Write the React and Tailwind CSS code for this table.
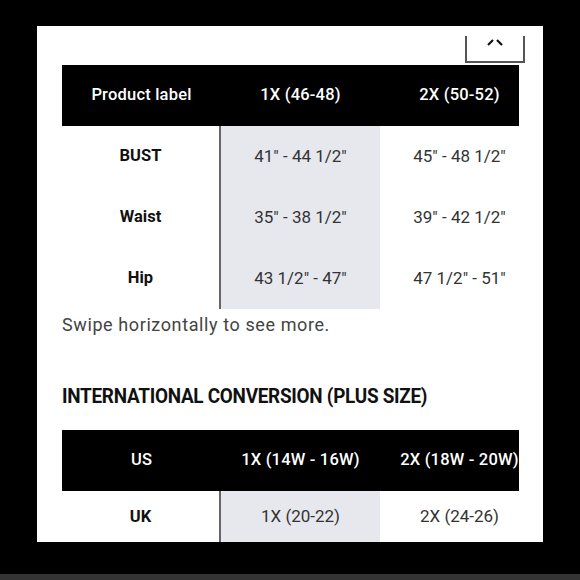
import React from "react";

const rows = [
  { label: "BUST", a: "41\" - 44 1/2\"", b: "45\" - 48 1/2\"" },
  { label: "Waist", a: "35\" - 38 1/2\"", b: "39\" - 42 1/2\"" },
  { label: "Hip", a: "43 1/2\" - 47\"", b: "47 1/2\" - 51\"" },
];

const font = { fontFamily: "Roboto, 'DejaVu Sans', sans-serif" };

function SizeTable({ head, body, rowH }) {
  return (
    <div className="w-[457px] overflow-hidden shrink-0">
      <div className="w-[477px]">
        <div className="flex h-[61px] bg-black text-white text-[16.5px] font-medium items-center tracking-[0.2px]">
          {head.map((h) => (
            <div key={h} className="w-[159px] text-center">{h}</div>
          ))}
        </div>
        {body.map((r) => (
          <div key={r.label} className={`flex ${rowH} items-center`}>
            <div className="w-[157px] text-center font-bold text-[16.5px] text-[#111]">{r.label}</div>
            <div className="w-[161px] h-full flex items-center justify-center bg-[#e6e8ee] border-l-2 border-[#666] text-[17px] text-[#333]">
              {r.a}
            </div>
            <div className="w-[159px] text-center text-[17px] text-[#333]">{r.b}</div>
          </div>
        ))}
      </div>
    </div>
  );
}

export default function App() {
  return (
    <div className="w-[580px] h-[580px] bg-black flex flex-col" style={font}>
      <div className="ml-[37px] mt-[26px] w-[506px] h-[516px] bg-white relative overflow-hidden flex flex-col pl-[25px]">
        {/* collapse button */}
        <div className="absolute right-[18px] top-[10px] w-[60px] h-[27px] border-l-2 border-r-2 border-b-2 border-[#555] flex justify-center">
          <svg width="20" height="8" viewBox="0 0 20 8" className="mt-[2px]">
            <path d="M3 7 L8 2" stroke="#111" strokeWidth="2.2" fill="none" />
            <path d="M12 2 L17 7" stroke="#111" strokeWidth="2.2" fill="none" />
          </svg>
        </div>

        <div className="mt-[39px]">
          <SizeTable head={["Product label", "1X (46-48)", "2X (50-52)"]} body={rows} rowH="h-[61px]" />
        </div>

        <p className="mt-[6px] text-[18px] leading-[20px] tracking-[0.6px] text-[#444]">Swipe horizontally to see more.</p>

        <h2 className="mt-[49px] text-[21px] leading-[24px] font-bold text-[#111] tracking-[-0.3px] origin-left scale-x-[0.9] whitespace-nowrap">
          INTERNATIONAL CONVERSION (PLUS SIZE)
        </h2>

        <div className="mt-[22px]">
          <SizeTable
            head={["US", "1X (14W - 16W)", "2X (18W - 20W)"]}
            body={[{ label: "UK", a: "1X (20-22)", b: "2X (24-26)" }]}
            rowH="h-[52px]"
          />
        </div>
      </div>
      <div className="mt-auto h-[6px] bg-[#333]" />
    </div>
  );
}
